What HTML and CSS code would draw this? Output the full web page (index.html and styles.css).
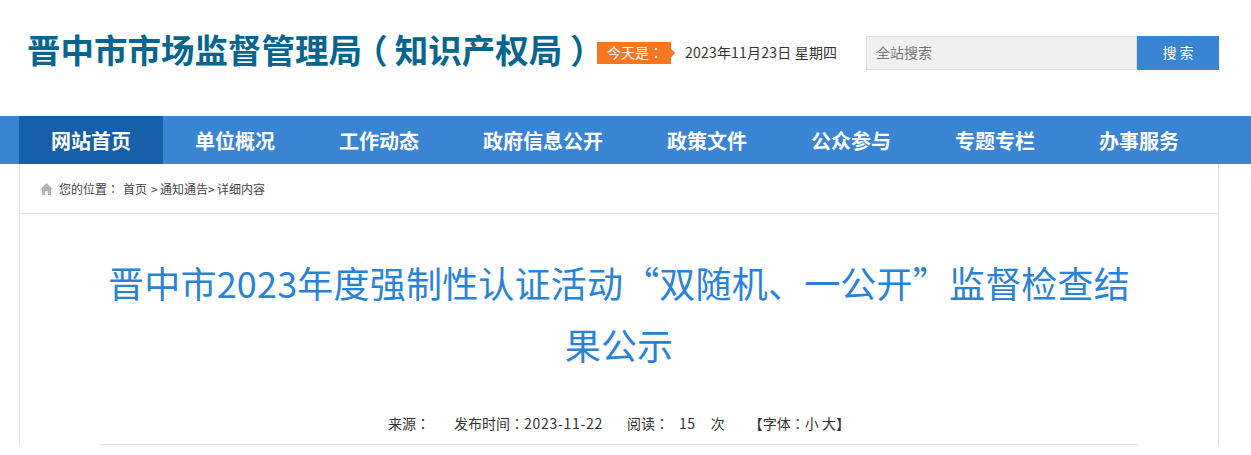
FILE: index.html
```html
<!DOCTYPE html>
<html lang="zh-CN">
<head>
    <meta charset="UTF-8">
    <title>晋中市2023年度强制性认证活动“双随机、一公开”监督检查结果公示</title>
    <link rel="stylesheet" href="styles.css">
</head>
<body>
    <div class="header">
        <h1 class="site-name">晋中市市场监督管理局<span class="paren-open">（</span>知识产权局<span class="paren-close">）</span></h1>
        <div class="today">今天是<span class="colon">：</span></div>
        <div class="date">2023年11月23日 星期四</div>
        <form class="search-bar">
            <input type="text" class="search-input" placeholder="全站搜索">
            <input type="button" class="search-btn" value="搜 索">
        </form>
    </div>

    <div class="nav">
        <ul class="nav-list">
            <li class="nav-item active"><a href="#">网站首页</a></li>
            <li class="nav-item"><a href="#">单位概况</a></li>
            <li class="nav-item"><a href="#">工作动态</a></li>
            <li class="nav-item"><a href="#">政府信息公开</a></li>
            <li class="nav-item"><a href="#">政策文件</a></li>
            <li class="nav-item"><a href="#">公众参与</a></li>
            <li class="nav-item"><a href="#">专题专栏</a></li>
            <li class="nav-item"><a href="#">办事服务</a></li>
        </ul>
    </div>

    <div class="container">
        <div class="crumbs">
            <svg class="home-icon" width="13" height="12" viewBox="0 0 13 12">
                <path d="M6.5 0L0 6.5H2V12H5.2V8H7.8V12H11V6.5H13Z" fill="#b3b3b3"/>
            </svg>
            <span class="crumbs-label">您的位置<span class="colon">：</span></span>
            <a href="#">首页</a>
            <span class="crumbs-path"><span class="sep">&gt;</span>通知通告<span class="sep">&gt;</span>详细内容</span>
        </div>
        <div class="article">
            <h2 class="article-title">晋中市2023年度强制性认证活动“双随机、一公开”监督检查结果公示</h2>
            <div class="article-info">
                <span>来源<span class="colon">：</span></span>
                <span>发布时间<span class="colon">：</span><span class="num">2023-11-22</span></span>
                <span>阅读<span class="colon">：</span><span class="num read-count">15</span>次</span>
                <span>【字体<span class="colon">：</span>小 大】</span>
            </div>
        </div>
    </div>
</body>
</html>
```

FILE: styles.css
```css
* {
    box-sizing: border-box;
}
body {
    margin: 0;
    font-family: "Noto Sans CJK SC", "Liberation Sans", sans-serif;
    font-size: 12px;
    color: #333;
    background-color: #fff;
    overflow: hidden;
}
a {
    color: inherit;
    text-decoration: none;
}
.colon {
    font-family: "Noto Sans CJK TC", sans-serif;
    font-feature-settings: "locl" 0;
}
.header {
    width: 1200px;
    height: 116px;
    margin-left: 19px;
    padding-top: 32px;
    display: flex;
    align-items: flex-start;
}
.site-name {
    margin: -2px 0 0 8px;
    width: 570px;
    font-size: 33.5px;
    line-height: 38px;
    color: #04668f;
    font-weight: bold;
    white-space: nowrap;
}
.paren-open {
    font-feature-settings: "halt";
    margin: 0 7px 0 9px;
}
.paren-close {
    font-feature-settings: "halt";
    margin-left: 8px;
}
.today {
    position: relative;
    width: 74px;
    height: 22px;
    margin-top: 10px;
    padding-left: 10px;
    line-height: 21px;
    font-size: 14px;
    color: #fff;
    background-color: #f97720;
}
.today::after {
    content: "";
    position: absolute;
    right: -3px;
    top: 8px;
    width: 6px;
    height: 6px;
    background-color: #f97720;
    transform: rotate(45deg);
}
.date {
    width: 181px;
    margin-left: 14px;
    margin-top: 9px;
    line-height: 22px;
    font-size: 14px;
    letter-spacing: 0.2px;
    white-space: nowrap;
}
.search-bar {
    display: flex;
    margin-top: 4px;
}
.search-input {
    width: 271px;
    height: 34px;
    padding: 0 9px 3px;
    border: 1px solid #e0e0e0;
    background-color: #f0f0f0;
    font-family: inherit;
    font-size: 14px;
}
.search-input::placeholder {
    color: #777;
}
.search-btn {
    width: 82px;
    height: 34px;
    padding-bottom: 4px;
    border: none;
    color: #fff;
    background-color: #3a85d3;
    font-family: inherit;
    font-size: 14px;
}
.nav {
    height: 48px;
    background-color: #3a85d3;
}
.nav-list {
    width: 1200px;
    margin: 0 0 0 19px;
    padding: 0;
    list-style: none;
    display: flex;
}
.nav-item {
    padding: 0 32px;
    text-align: center;
    line-height: 50px;
    height: 48px;
    font-size: 20px;
    font-weight: bold;
    color: #fff;
    white-space: nowrap;
}
.nav-item.active {
    background-color: #165fa9;
}
.container {
    width: 1200px;
    margin-left: 19px;
    border-left: 1px solid #e6e6e6;
    border-right: 1px solid #e6e6e6;
}
.crumbs {
    height: 50px;
    padding-left: 20px;
    display: flex;
    align-items: center;
    border-bottom: 1px solid #e6e6e6;
    color: #444;
}
.home-icon {
    margin-right: 6px;
}
.crumbs-label {
    margin-right: 4px;
}
.crumbs-path {
    margin-left: 4px;
}
.sep {
    display: inline-block;
    width: 9px;
}
.article {
    margin: 0 80px;
}
.article-title {
    margin: 37px 0 0;
    text-align: center;
    font-size: 36px;
    line-height: 62px;
    letter-spacing: 0.2px;
    font-weight: normal;
    color: #2a82d6;
}
.article-info {
    display: flex;
    justify-content: center;
    gap: 24px;
    margin-top: 38px;
    height: 32px;
    font-size: 14px;
    line-height: 20px;
    border-bottom: 1px solid #e0e0e0;
}
.num {
    letter-spacing: 0.7px;
}
.read-count {
    margin: 0 15px 0 10px;
}
```
